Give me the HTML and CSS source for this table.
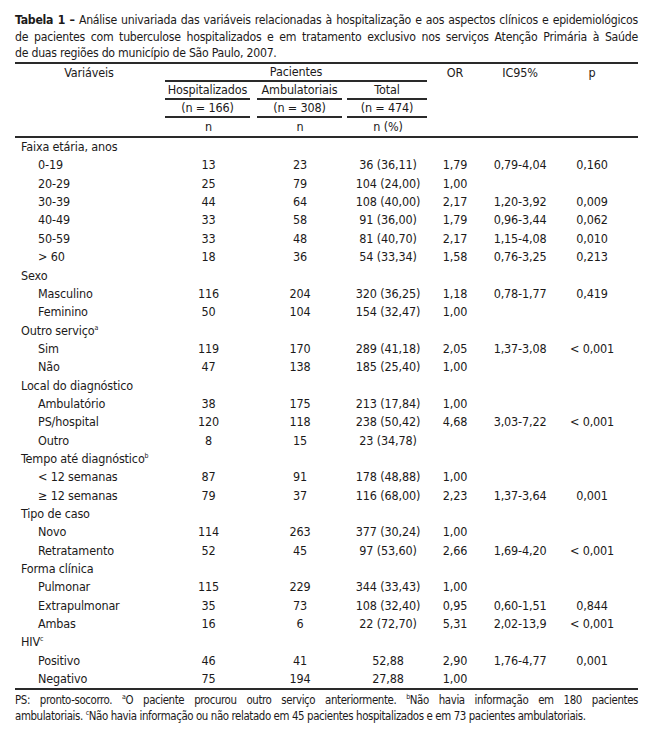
FILE: index.html
```html
<!DOCTYPE html>
<html lang="pt">
<head>
<meta charset="utf-8">
<title>Tabela 1</title>
<link rel="stylesheet" href="styles.css">
</head>
<body>
<div class="page">
  <div class="caption">
    <span class="cap-line just"><b>Tabela 1 –</b> Análise univariada das variáveis relacionadas à hospitalização e aos aspectos clínicos e epidemiológicos</span>
    <span class="cap-line just">de pacientes com tuberculose hospitalizados e em tratamento exclusivo nos serviços Atenção Primária à Saúde</span>
    <span class="cap-line">de duas regiões do município de São Paulo, 2007.</span>
  </div>
  <table class="data">
    <colgroup>
      <col class="c-label"><col class="c-hosp"><col class="c-amb"><col class="c-total"><col class="c-or"><col class="c-ic"><col class="c-p">
    </colgroup>
    <thead>
      <tr class="h1">
        <th>Variáveis</th>
        <th colspan="3"><span class="ul ul-pac">Pacientes</span></th>
        <th>OR</th>
        <th>IC95%</th>
        <th class="pcol">p</th>
      </tr>
      <tr>
        <th></th>
        <th><span class="ul ul-h">Hospitalizados</span></th>
        <th><span class="ul ul-a">Ambulatoriais</span></th>
        <th><span class="ul ul-t">Total</span></th>
        <th></th><th></th><th></th>
      </tr>
      <tr>
        <th></th>
        <th><span class="ul ul-h">(n = 166)</span></th>
        <th><span class="ul ul-a">(n = 308)</span></th>
        <th><span class="ul ul-t">(n = 474)</span></th>
        <th></th><th></th><th></th>
      </tr>
      <tr class="h4">
        <th></th>
        <th>n</th>
        <th>n</th>
        <th>n (%)</th>
        <th></th><th></th><th></th>
      </tr>
    </thead>
    <tbody>
      <tr class="cat"><td colspan="7">Faixa etária, anos</td></tr>
      <tr><td class="sub">0-19</td><td>13</td><td>23</td><td>36 (36,11)</td><td>1,79</td><td>0,79-4,04</td><td class="pcol">0,160</td></tr>
      <tr><td class="sub">20-29</td><td>25</td><td>79</td><td>104 (24,00)</td><td>1,00</td><td></td><td class="pcol"></td></tr>
      <tr><td class="sub">30-39</td><td>44</td><td>64</td><td>108 (40,00)</td><td>2,17</td><td>1,20-3,92</td><td class="pcol">0,009</td></tr>
      <tr><td class="sub">40-49</td><td>33</td><td>58</td><td>91 (36,00)</td><td>1,79</td><td>0,96-3,44</td><td class="pcol">0,062</td></tr>
      <tr><td class="sub">50-59</td><td>33</td><td>48</td><td>81 (40,70)</td><td>2,17</td><td>1,15-4,08</td><td class="pcol">0,010</td></tr>
      <tr><td class="sub">&gt; 60</td><td>18</td><td>36</td><td>54 (33,34)</td><td>1,58</td><td>0,76-3,25</td><td class="pcol">0,213</td></tr>
      <tr class="cat"><td colspan="7">Sexo</td></tr>
      <tr><td class="sub">Masculino</td><td>116</td><td>204</td><td>320 (36,25)</td><td>1,18</td><td>0,78-1,77</td><td class="pcol">0,419</td></tr>
      <tr><td class="sub">Feminino</td><td>50</td><td>104</td><td>154 (32,47)</td><td>1,00</td><td></td><td class="pcol"></td></tr>
      <tr class="cat"><td colspan="7">Outro serviço<sup>a</sup></td></tr>
      <tr><td class="sub">Sim</td><td>119</td><td>170</td><td>289 (41,18)</td><td>2,05</td><td>1,37-3,08</td><td class="pcol">&lt; 0,001</td></tr>
      <tr><td class="sub">Não</td><td>47</td><td>138</td><td>185 (25,40)</td><td>1,00</td><td></td><td class="pcol"></td></tr>
      <tr class="cat"><td colspan="7">Local do diagnóstico</td></tr>
      <tr><td class="sub">Ambulatório</td><td>38</td><td>175</td><td>213 (17,84)</td><td>1,00</td><td></td><td class="pcol"></td></tr>
      <tr><td class="sub">PS/hospital</td><td>120</td><td>118</td><td>238 (50,42)</td><td>4,68</td><td>3,03-7,22</td><td class="pcol">&lt; 0,001</td></tr>
      <tr><td class="sub">Outro</td><td>8</td><td>15</td><td>23 (34,78)</td><td></td><td></td><td class="pcol"></td></tr>
      <tr class="cat"><td colspan="7">Tempo até diagnóstico<sup>b</sup></td></tr>
      <tr><td class="sub">&lt; 12 semanas</td><td>87</td><td>91</td><td>178 (48,88)</td><td>1,00</td><td></td><td class="pcol"></td></tr>
      <tr><td class="sub">≥ 12 semanas</td><td>79</td><td>37</td><td>116 (68,00)</td><td>2,23</td><td>1,37-3,64</td><td class="pcol">0,001</td></tr>
      <tr class="cat"><td colspan="7">Tipo de caso</td></tr>
      <tr><td class="sub">Novo</td><td>114</td><td>263</td><td>377 (30,24)</td><td>1,00</td><td></td><td class="pcol"></td></tr>
      <tr><td class="sub">Retratamento</td><td>52</td><td>45</td><td>97 (53,60)</td><td>2,66</td><td>1,69-4,20</td><td class="pcol">&lt; 0,001</td></tr>
      <tr class="cat"><td colspan="7">Forma clínica</td></tr>
      <tr><td class="sub">Pulmonar</td><td>115</td><td>229</td><td>344 (33,43)</td><td>1,00</td><td></td><td class="pcol"></td></tr>
      <tr><td class="sub">Extrapulmonar</td><td>35</td><td>73</td><td>108 (32,40)</td><td>0,95</td><td>0,60-1,51</td><td class="pcol">0,844</td></tr>
      <tr><td class="sub">Ambas</td><td>16</td><td>6</td><td>22 (72,70)</td><td>5,31</td><td>2,02-13,9</td><td class="pcol">&lt; 0,001</td></tr>
      <tr class="cat"><td colspan="7">HIV<sup>c</sup></td></tr>
      <tr><td class="sub">Positivo</td><td>46</td><td>41</td><td>52,88</td><td>2,90</td><td>1,76-4,77</td><td class="pcol">0,001</td></tr>
      <tr><td class="sub">Negativo</td><td>75</td><td>194</td><td>27,88</td><td>1,00</td><td></td><td class="pcol"></td></tr>
    </tbody>
  </table>
  <div class="notes">
    <span class="note-line just">PS: pronto-socorro. <sup>a</sup>O paciente procurou outro serviço anteriormente. <sup>b</sup>Não havia informação em 180 pacientes</span>
    <span class="note-line">ambulatoriais. <sup>c</sup>Não havia informação ou não relatado em 45 pacientes hospitalizados e em 73 pacientes ambulatoriais.</span>
  </div>
</div>
</body>
</html>
```

FILE: styles.css
```css
html, body {
  margin: 0;
  padding: 0;
  background: #ffffff;
}

body {
  font-family: "DejaVu Sans Condensed", "DejaVu Sans", sans-serif;
  font-stretch: condensed;
  color: #1c1a1a;
}

.page {
  width: 623px;
  padding: 12px 0 0 15px;
}

.caption {
  font-size: 12.2px;
  letter-spacing: -0.25px;
  line-height: 16.7px;
}

.cap-line,
.note-line {
  display: block;
  white-space: nowrap;
}

.just {
  text-align: justify;
  text-align-last: justify;
}

.caption b {
  font-weight: bold;
}

.data {
  width: 623px;
  border-collapse: collapse;
  table-layout: fixed;
  font-size: 12.5px;
  letter-spacing: -0.15px;
  line-height: 18.34px;
  border-top: 2px solid #2a2a2a;
  border-bottom: 2px solid #2a2a2a;
}

.data thead {
  line-height: 18px;
}

.c-label { width: 148px; }
.c-hosp { width: 91px; }
.c-amb { width: 92px; }
.c-total { width: 84px; }
.c-or { width: 50px; }
.c-ic { width: 80px; }
.c-p { width: 78px; }

.data th,
.data td {
  padding: 0;
  text-align: center;
  font-weight: normal;
  white-space: nowrap;
  vertical-align: middle;
}

.data .pcol {
  padding-right: 14px;
}

.data thead tr.h4 th {
  border-bottom: 2px solid #2a2a2a;
}

.ul {
  display: block;
  line-height: 16px;
  border-bottom: 2px solid #2a2a2a;
}

.ul-pac { margin: 0 3px 0 2px; }
.ul-h { margin: 0 4px 0 2px; }
.ul-a { margin: 0 4px 0 3px; }
.ul-t { margin: 0 3px 0 1px; }

.data td.sub {
  text-align: left;
  padding-left: 23px;
}

.data tr.cat td {
  text-align: left;
  padding-left: 6px;
}

sup {
  font-size: 7px;
  line-height: 0;
  vertical-align: 5px;
}

.notes {
  font-size: 11.4px;
  letter-spacing: -0.4px;
  line-height: 15.5px;
  padding-top: 3px;
}
```
